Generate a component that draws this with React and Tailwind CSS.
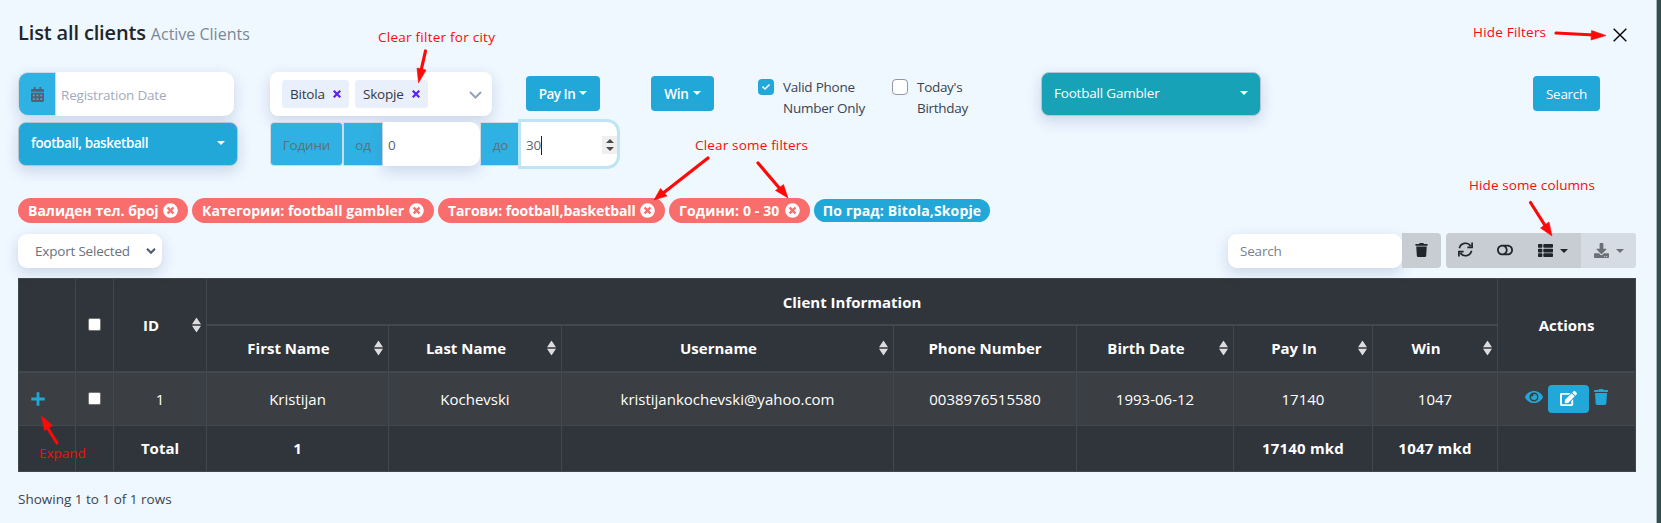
import {
  FaCalendarAlt,
  FaTrash,
  FaToggleOff,
  FaThList,
  FaDownload,
  FaEye,
  FaEdit,
  FaTimesCircle,
  FaCheck,
} from "react-icons/fa";

const fieldShadow = "shadow-[0_5px_14px_rgba(70,100,150,0.22)]";

function Caret({ className = "" }) {
  return (
    <svg viewBox="0 0 8 4" className={`h-[4px] w-[8px] shrink-0 fill-current ${className}`}>
      <path d="M0 0h8L4 4z" />
    </svg>
  );
}

function ChipX() {
  return (
    <svg viewBox="0 0 8 8" className="h-2 w-2 stroke-[#5a22f5] stroke-[2.2]">
      <path d="M.7.7l6.6 6.6M7.3.7L.7 7.3" />
    </svg>
  );
}

function Chip({ children, className }) {
  return (
    <span className={`flex h-7 items-center justify-between rounded-[3px] bg-[#eaf0fb] px-2 text-[#333a45] ${className}`}>
      {children}
      <ChipX />
    </span>
  );
}

function Badge({ children, className }) {
  return (
    <span className={`flex h-[25px] items-center justify-between whitespace-nowrap rounded-full bg-[#f96e6c] px-[10px] ${className}`}>
      <span>{children}</span>
      <FaTimesCircle className="h-[15px] w-[15px] shrink-0" />
    </span>
  );
}

function Sort() {
  return (
    <svg viewBox="0 0 9 15" className="absolute right-[5px] top-1/2 h-[15px] w-[9px] -translate-y-1/2 fill-[#dcdcdc]">
      <path d="M4.5 0L9 6.7H0zM0 8.3h9L4.5 15z" />
    </svg>
  );
}

function Th({ children, sort, className = "", ...rest }) {
  return (
    <th {...rest} className={`relative border border-[#41494f] p-0 ${sort ? "pr-[18px]" : ""} ${className}`}>
      {children}
      {sort && <Sort />}
    </th>
  );
}

function Td({ children, className = "" }) {
  return <td className={`border border-[#41494f] p-0 text-center ${className}`}>{children}</td>;
}

function Box() {
  return <span className="mx-auto block h-[13px] w-[13px] rounded-[2px] border border-[#767676] bg-white" />;
}

function Addon({ children, className }) {
  return (
    <span className={`flex h-11 items-center justify-center border border-[#cfdbe4] bg-[#30b1e3] text-[#5f6f7c] ${className}`}>
      {children}
    </span>
  );
}

function Note({ children, className }) {
  return <span className={`absolute whitespace-nowrap text-[13.5px] leading-5 text-[#ff0808] ${className}`}>{children}</span>;
}

function Filters() {
  return (
    <>
      <div className="flex h-[50px] items-start">
        <div className={`flex h-11 w-[216px] rounded-[10px] bg-white ${fieldShadow}`}>
          <Addon className="w-[38px] rounded-l-[10px]">
            <FaCalendarAlt className="h-[15px] w-[13px] text-[#56616f]" />
          </Addon>
          <span className="flex items-center pl-[5px] pt-[3px] text-[#a3aabd]">Registration Date</span>
        </div>
        <div className={`ml-9 flex h-11 w-[222px] items-center rounded-[8px] bg-white pl-3 pr-[10px] ${fieldShadow}`}>
          <Chip className="w-[67px]">Bitola</Chip>
          <Chip className="ml-1.5 w-[73px]">Skopje</Chip>
          <svg viewBox="0 0 13 8" className="ml-auto mt-[2px] h-2 w-[13px] fill-none stroke-[#98a2bd] stroke-2">
            <path d="M1 1l5.5 5.5L12 1" />
          </svg>
        </div>
        <button className="ml-[34px] mt-1 flex h-[35px] w-[74px] items-center justify-center gap-1 rounded-[4px] bg-[#22a7d9] pt-[2px] font-semibold tracking-[-0.5px] text-white">
          Pay In <Caret className="mb-[3px]" />
        </button>
        <button className="ml-[51px] mt-1 flex h-[35px] w-[63px] items-center justify-center gap-1 rounded-[4px] bg-[#22a7d9] pt-[2px] font-semibold tracking-[-0.2px] text-white">
          Win <Caret className="mb-[3px]" />
        </button>
        <div className="ml-11 mt-[5px] flex w-[134px] gap-[9px] leading-[21px] tracking-[-0.25px] text-[#3b4450]">
          <span className="mt-[2px] flex h-4 w-4 shrink-0 items-center justify-center rounded-[4px] bg-[#22a7d9]">
            <FaCheck className="h-2 w-2 text-white" />
          </span>
          <span>
            Valid Phone
            <br />
            Number Only
          </span>
        </div>
        <div className="mt-[5px] flex w-[149px] gap-[9px] leading-[21px] tracking-[-0.3px] text-[#3b4450]">
          <span className="mt-[2px] h-4 w-4 shrink-0 rounded-[4px] border border-[#8e98a8] bg-white" />
          <span>
            Today's
            <br />
            Birthday
          </span>
        </div>
        <div className={`flex h-11 w-[220px] items-center justify-between rounded-[8px] border border-[#b5c4cf] bg-[#18a2b8] pb-[2px] pl-3 pr-3 font-medium text-white ${fieldShadow}`}>
          Football Gambler <Caret />
        </div>
        <button className="ml-[272px] mt-1 h-[35px] w-[67px] rounded-[4px] bg-[#22a7d9] pt-px font-medium tracking-[-0.3px] text-white">Search</button>
      </div>
      <div className="flex h-[76px] items-start">
        <div className={`flex h-11 w-[220px] items-center justify-between rounded-[8px] border border-[#b5c4cf] bg-[#22a7d9] pb-[2px] pl-3 pr-3 font-semibold tracking-[-0.4px] text-white ${fieldShadow}`}>
          football, basketball <Caret />
        </div>
        <Addon className="ml-8 w-[73px] rounded-[4px] pt-[3px]">Години</Addon>
        <Addon className="w-10 pt-[3px]">од</Addon>
        <span className={`flex h-11 w-[97px] items-center rounded-r-[10px] bg-white pl-[5px] pt-[2px] text-[#5c6672] ${fieldShadow}`}>0</span>
        <Addon className="w-[41px] pt-[3px]">до</Addon>
        <span className="relative flex h-11 w-24 items-center rounded-r-[10px] bg-white pl-[5px] pt-[2px] text-[#5c6672] shadow-[0_0_0_3px_#bfe5f5]">
          30
          <span className="h-[19px] w-px bg-[#222]" />
          <span className="ml-auto flex h-[18px] w-[15px] flex-col items-center justify-between bg-[#efefef] py-[3px] text-[#4a4a4a]">
            <Caret className="rotate-180" />
            <Caret />
          </span>
        </span>
      </div>
    </>
  );
}

function Toolbar() {
  return (
    <div className="mt-[10px] flex h-[45px] items-start">
      <div className={`mt-[1px] flex h-[34px] w-[144px] items-center justify-between rounded-[9px] bg-white pl-[17px] pr-[6px] text-[#68727f] ${fieldShadow}`}>
        Export Selected
        <svg viewBox="0 0 10 6" className="h-1.5 w-[10px] fill-none stroke-[#4f5a66] stroke-2">
          <path d="M1 .8l4 4 4-4" />
        </svg>
      </div>
      <div className={`ml-[1066px] mt-[1px] flex h-[34px] w-[174px] items-center rounded-[9px] bg-white pl-3 text-[#76808e] ${fieldShadow}`}>Search</div>
      <button className="flex h-[35px] w-[39px] items-center justify-center rounded-r-[4px] bg-[#c8ccd3] pb-[2px] text-[#212529]">
        <FaTrash className="h-[14px] w-[13px]" />
      </button>
      <div className="ml-[5px] flex h-[35px] w-[190px] overflow-hidden rounded-[4px] bg-[#c8ccd3] text-[#212529]">
        <span className="flex w-[39px] items-center justify-center pb-[2px]">
          <svg viewBox="0 0 15 15" className="h-[15px] w-[15px] fill-none stroke-current stroke-[1.7]">
            <path d="M1.4 6.2A6.2 6.2 0 0 1 12.6 4M14.1.6v4.7H9.4M13.6 8.8A6.2 6.2 0 0 1 2.4 11M.9 14.4V9.7h4.7" />
          </svg>
        </span>
        <span className="flex w-10 items-center justify-center pb-[2px]">
          <FaToggleOff className="h-4 w-4" />
        </span>
        <span className="flex w-[56px] items-center justify-center gap-[7px]">
          <FaThList className="h-[15px] w-[15px]" />
          <Caret />
        </span>
        <span className="flex w-[55px] items-center justify-center gap-[7px] bg-[#d6dce3] text-[#6b7077]">
          <FaDownload className="h-[15px] w-[15px]" />
          <Caret />
        </span>
      </div>
    </div>
  );
}

function ClientTable() {
  return (
    <table className="w-[1617px] table-fixed border-collapse bg-[#30343b] text-[15px] tracking-normal text-white">
      <colgroup>
        <col className="w-[57px]" />
        <col className="w-[38px]" />
        <col className="w-[93px]" />
        <col className="w-[182px]" />
        <col className="w-[173px]" />
        <col className="w-[332px]" />
        <col className="w-[183px]" />
        <col className="w-[157px]" />
        <col className="w-[139px]" />
        <col className="w-[125px]" />
        <col className="w-[138px]" />
      </colgroup>
      <thead className="border-b-2 border-[#41494f] font-bold">
        <tr className="h-[46px]">
          <Th rowSpan={2} />
          <Th rowSpan={2}>
            <Box />
          </Th>
          <Th rowSpan={2} sort>ID</Th>
          <Th colSpan={7} className="border-b-2 pt-px">Client Information</Th>
          <Th rowSpan={2}>Actions</Th>
        </tr>
        <tr className="h-[47px]">
          <Th sort className="pt-px">First Name</Th>
          <Th sort className="pt-px">Last Name</Th>
          <Th sort className="pt-px">Username</Th>
          <Th className="pt-px">Phone Number</Th>
          <Th sort className="pt-px">Birth Date</Th>
          <Th sort className="pt-px">Pay In</Th>
          <Th sort className="pt-px">Win</Th>
        </tr>
      </thead>
      <tbody>
        <tr className="h-[54px] bg-[#3b3f43]">
          <Td>
            <svg viewBox="0 0 14 14" className="ml-3 h-[14px] w-[14px] stroke-[#22a7d9] stroke-[2.8]">
              <path d="M7 .3v13.4M.3 7h13.4" strokeLinecap="butt" />
            </svg>
          </Td>
          <Td>
            <Box />
          </Td>
          <Td>1</Td>
          <Td>Kristijan</Td>
          <Td>Kochevski</Td>
          <Td>kristijankochevski@yahoo.com</Td>
          <Td>0038976515580</Td>
          <Td>1993-06-12</Td>
          <Td>17140</Td>
          <Td>1047</Td>
          <Td>
            <div className="flex items-center justify-center gap-[5px] text-[#22a7d9]">
              <FaEye className="mb-1 h-4 w-[18px]" />
              <span className="flex h-7 w-[41px] items-center justify-center rounded-[4px] bg-[#22a7d9] text-white">
                <FaEdit className="h-[15px] w-[17px]" />
              </span>
              <FaTrash className="mb-1 h-4 w-[14px]" />
            </div>
          </Td>
        </tr>
        <tr className="h-[46px] font-bold">
          <Td />
          <Td />
          <Td>Total</Td>
          <Td>1</Td>
          <Td />
          <Td />
          <Td />
          <Td />
          <Td className="tracking-[0.2px]">17140 mkd</Td>
          <Td className="tracking-[0.2px]">1047 mkd</Td>
          <Td />
        </tr>
      </tbody>
    </table>
  );
}

const arrows = [
  { d: "M425.5 51L420.5 73", head: "M418.5 83L417 68L426 70Z" },
  { d: "M708 158L662 194", head: "M654 200L660.5 188.5L667 196Z" },
  { d: "M758 163L781 190", head: "M788 198L775.5 190.5L783.5 184.5Z" },
  { d: "M1556 33L1594 35", head: "M1606 35.5L1591 40L1591.5 30.5Z" },
  { d: "M1530.5 202.5L1546 227", head: "M1552 236L1540.5 228L1549 222Z" },
  { d: "M57 443L47 427", head: "M41.5 416L52.5 425.5L44.5 430.5Z" },
];

function Annotations() {
  return (
    <div className="pointer-events-none absolute inset-0">
      <svg viewBox="0 0 1661 523" className="absolute inset-0 h-[523px] w-[1661px] fill-[#ff0808] stroke-[#ff0808]">
        {arrows.map((a) => (
          <g key={a.d}>
            <path d={a.d} strokeWidth="3.2" strokeLinecap="round" />
            <path d={a.head} strokeWidth="0.6" />
          </g>
        ))}
      </svg>
      <Note className="left-[378px] top-[27px] tracking-[0.25px]">Clear filter for city</Note>
      <Note className="left-[695px] top-[135px] tracking-[0.18px]">Clear some filters</Note>
      <Note className="left-[1473px] top-[22px] tracking-[0.2px]">Hide Filters</Note>
      <Note className="left-[1469px] top-[175px] tracking-[0.1px]">Hide some columns</Note>
      <Note className="left-[39px] top-[443px] tracking-[0px]">Expand</Note>
    </div>
  );
}

export default function App() {
  return (
    <div className="relative flex h-[523px] w-[1661px] overflow-hidden bg-[#2f5050] font-['Open_Sans','Noto_Sans',sans-serif] text-[13.5px] tracking-[-0.2px]">
      <main className="h-full w-[1657px] shrink-0 border-r border-[#a9b4bd] bg-[#eff7ff] pl-[18px]">
        <header className="flex h-[72px] items-start justify-between pr-[29px] pt-[18px]">
          <h1 className="text-[20px] font-semibold leading-[30px] tracking-[-0.15px] text-[#212529]">
            List all clients <small className="text-[16px] font-normal tracking-[0px] text-[#7c8794]">Active Clients</small>
          </h1>
          <svg viewBox="0 0 14 14" className="mt-[10px] h-[14px] w-[14px] stroke-black stroke-[1.4]">
            <path d="M.7.7l12.6 12.6M13.3.7L.7 13.3" />
          </svg>
        </header>
        <Filters />
        <div className="flex h-[25px] items-center gap-1 text-[14px] font-bold tracking-normal text-white">
          <Badge className="w-[170px]">Валиден тел. број</Badge>
          <Badge className="w-[242px]">Категории: football gambler</Badge>
          <Badge className="w-[227px] tracking-[-0.1px]">Тагови: football,basketball</Badge>
          <Badge className="w-[141px] tracking-[0.13px]">Години: 0 - 30</Badge>
          <span className="flex h-[23px] w-[176px] items-center justify-center rounded-full bg-[#22a7d9] tracking-[0.15px]">По град: Bitola,Skopje</span>
        </div>
        <Toolbar />
        <ClientTable />
        <p className="mt-[17px] leading-5 tracking-[0px] text-[#3b4450]">Showing 1 to 1 of 1 rows</p>
      </main>
      <Annotations />
    </div>
  );
}
